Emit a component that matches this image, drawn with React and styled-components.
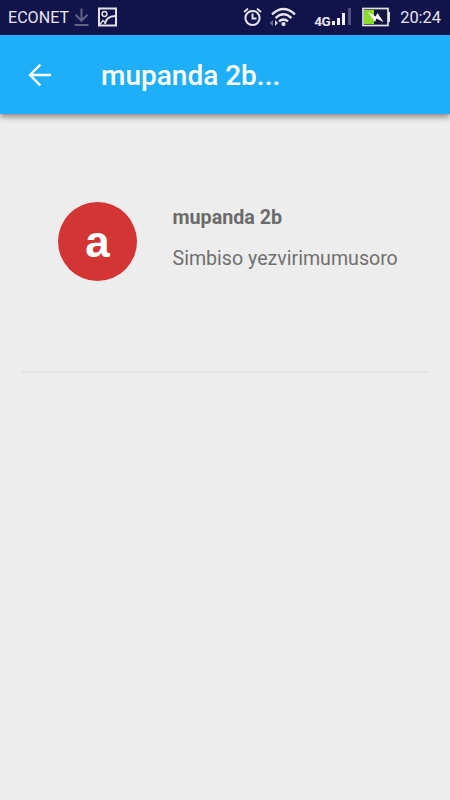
import React from "react";
import styled, { createGlobalStyle } from "styled-components";

const GlobalStyle = createGlobalStyle`
  * { box-sizing: border-box; }
  body { margin: 0; background: #ededed; font-family: Roboto, sans-serif; }
`;

const Screen = styled.div`
  width: 450px;
  height: 800px;
  overflow: hidden;
  display: flex;
  flex-direction: column;
  background: #ededed;
`;

const StatusBar = styled.div`
  height: 35px;
  flex: none;
  display: flex;
  justify-content: space-between;
  padding: 0 9px 0 8px;
  background: #12134a;
  border-bottom: 1px solid #160b43;
  color: #e6e6ee;
`;

const StatusGroup = styled.div`
  display: flex;
  align-items: center;
`;

const StatusText = styled.span`
  margin-left: ${(p) => p.$gap || 0}px;
  padding-top: 1px;
  font-size: ${(p) => p.$size}px;
  line-height: 33px;
  white-space: nowrap;
`;

const StatusIcon = styled.svg`
  display: block;
  flex: none;
  margin-left: ${(p) => p.$gap || 0}px;
`;

const NetworkLabel = styled.span`
  width: 17px;
  margin-left: 18px;
  padding-top: 7px;
  font-size: 13.5px;
  line-height: 14px;
  font-weight: 700;
  letter-spacing: -0.3px;
  white-space: nowrap;
`;

const AppBar = styled.header`
  height: 79px;
  flex: none;
  display: flex;
  align-items: center;
  padding-left: 28px;
  background: #1eaff8;
  color: #fff;
  box-shadow: 0 3px 6px rgba(0, 0, 0, 0.42);
`;

const BackButton = styled.button`
  width: 24px;
  height: 24px;
  padding: 0;
  border: 0;
  background: none;
  color: inherit;
  svg { display: block; }
`;

const Title = styled.h1`
  margin: 0 0 0 49px;
  padding-top: 2px;
  font-size: 28px;
  line-height: 34px;
  font-weight: 500;
  white-space: nowrap;
`;

const Content = styled.main`
  padding: 88px 22px 0;
`;

const Contact = styled.section`
  height: 171px;
  display: flex;
  align-items: flex-start;
  padding-left: 36px;
  border-bottom: 2px solid #e3e3e3;
`;

const Avatar = styled.div`
  width: 79px;
  height: 79px;
  display: flex;
  justify-content: center;
  border-radius: 50%;
  background: #d33434;
  color: #fff;
  font: 700 44px/79px "Liberation Sans", sans-serif;
`;

const Details = styled.div`
  margin-left: 35.5px;
  color: #6b6b6b;
`;

const Name = styled.div`
  margin-top: 4px;
  font-size: 19.7px;
  line-height: 24px;
  font-weight: 700;
  white-space: nowrap;
`;

const Subtitle = styled.div`
  margin-top: 17px;
  font-size: 19.6px;
  line-height: 24px;
  color: #707070;
  white-space: nowrap;
`;

const DownloadIcon = () => (
  <StatusIcon $gap={5} width="15" height="20" viewBox="0 0 15 20" fill="none" stroke="#626287" strokeWidth="2">
    <path d="M7.5 1.5v12M1.5 7.8l6 6 6-6M.5 18h14" />
  </StatusIcon>
);

const PictureIcon = () => (
  <StatusIcon $gap={8} width="20" height="20" viewBox="0 0 20 20" fill="none" stroke="#e2e2e8">
    <rect x="2" y="1.5" width="17" height="17" strokeWidth="2" />
    <circle cx="7.5" cy="7" r="2.4" strokeWidth="1.5" />
    <path d="M8 17Q9 9.5 18 9" strokeWidth="1.8" />
    <path d="M3 17.5l3-4 3 2.5" strokeWidth="1.3" />
  </StatusIcon>
);

const AlarmIcon = () => (
  <StatusIcon width="19" height="20" viewBox="0 0 19 20" fill="none" stroke="#e5e5ec">
    <circle cx="9.5" cy="11" r="7.1" strokeWidth="2" />
    <path d="M1 5l4-3.4M18 5l-4-3.4M9.5 6.5V11.5h4" strokeWidth="1.9" />
  </StatusIcon>
);

const WifiIcon = () => (
  <StatusIcon $gap={7} width="27" height="20" viewBox="0 0 27 20" fill="none" stroke="#e5e5ec">
    <path d="M3 7.3Q14.5-3.5 26 7.3M6.5 11.2Q14.5 3.5 22.5 11.2M10 14.4Q14.5 10.4 19 14.4" strokeWidth="2.4" />
    <circle cx="14.5" cy="17.1" r="2.1" fill="#e5e5ec" stroke="none" />
    <path d="M4 13v6L.5 16z" fill="#6b6b91" stroke="none" />
    <path d="M6 13v6l3-3z" fill="#d6d6e0" stroke="none" />
  </StatusIcon>
);

const SignalIcon = () => (
  <StatusIcon $gap={1} width="20" height="20" viewBox="0 0 20 20" fill="#f0f0f5">
    <path d="M0 14h3v4H0zM5 11h3v7H5zM10 6h3v12h-3z" />
    <path d="M16 1h3v17h-3z" fill="#515078" />
  </StatusIcon>
);

const BatteryIcon = () => (
  <StatusIcon $gap={10} width="28" height="20" viewBox="0 0 28 20">
    <rect x="1" y="1.5" width="25" height="17" fill="#15163f" stroke="#e3e3e3" strokeWidth="1.7" />
    <path d="M2 3h10v14H2z" fill="#8bdc2d" />
    <path d="M26 5h2v10h-2z" fill="#e3e3e3" />
    <path d="M6 5l7.5 4.5L15.5 6 21.5 15l-7-3.5-1.5 3.5z" fill="#fff" />
  </StatusIcon>
);

export default function App() {
  return (
    <>
      <GlobalStyle />
      <Screen>
        <StatusBar>
          <StatusGroup>
            <StatusText $size={16.1}>ECONET</StatusText>
            <DownloadIcon />
            <PictureIcon />
          </StatusGroup>
          <StatusGroup>
            <AlarmIcon />
            <WifiIcon />
            <NetworkLabel>4G</NetworkLabel>
            <SignalIcon />
            <BatteryIcon />
            <StatusText $size={16.4} $gap={10}>20:24</StatusText>
          </StatusGroup>
        </StatusBar>
        <AppBar>
          <BackButton aria-label="Back">
            <svg width="24" height="24" viewBox="0 0 24 24" fill="none" stroke="currentColor" strokeWidth="2.3">
              <path d="M12.3 1.6L2 12l10.3 10.4M2 12h21" />
            </svg>
          </BackButton>
          <Title>mupanda 2b...</Title>
        </AppBar>
        <Content>
          <Contact>
            <Avatar>a</Avatar>
            <Details>
              <Name>mupanda 2b</Name>
              <Subtitle>Simbiso yezvirimumusoro</Subtitle>
            </Details>
          </Contact>
        </Content>
      </Screen>
    </>
  );
}
